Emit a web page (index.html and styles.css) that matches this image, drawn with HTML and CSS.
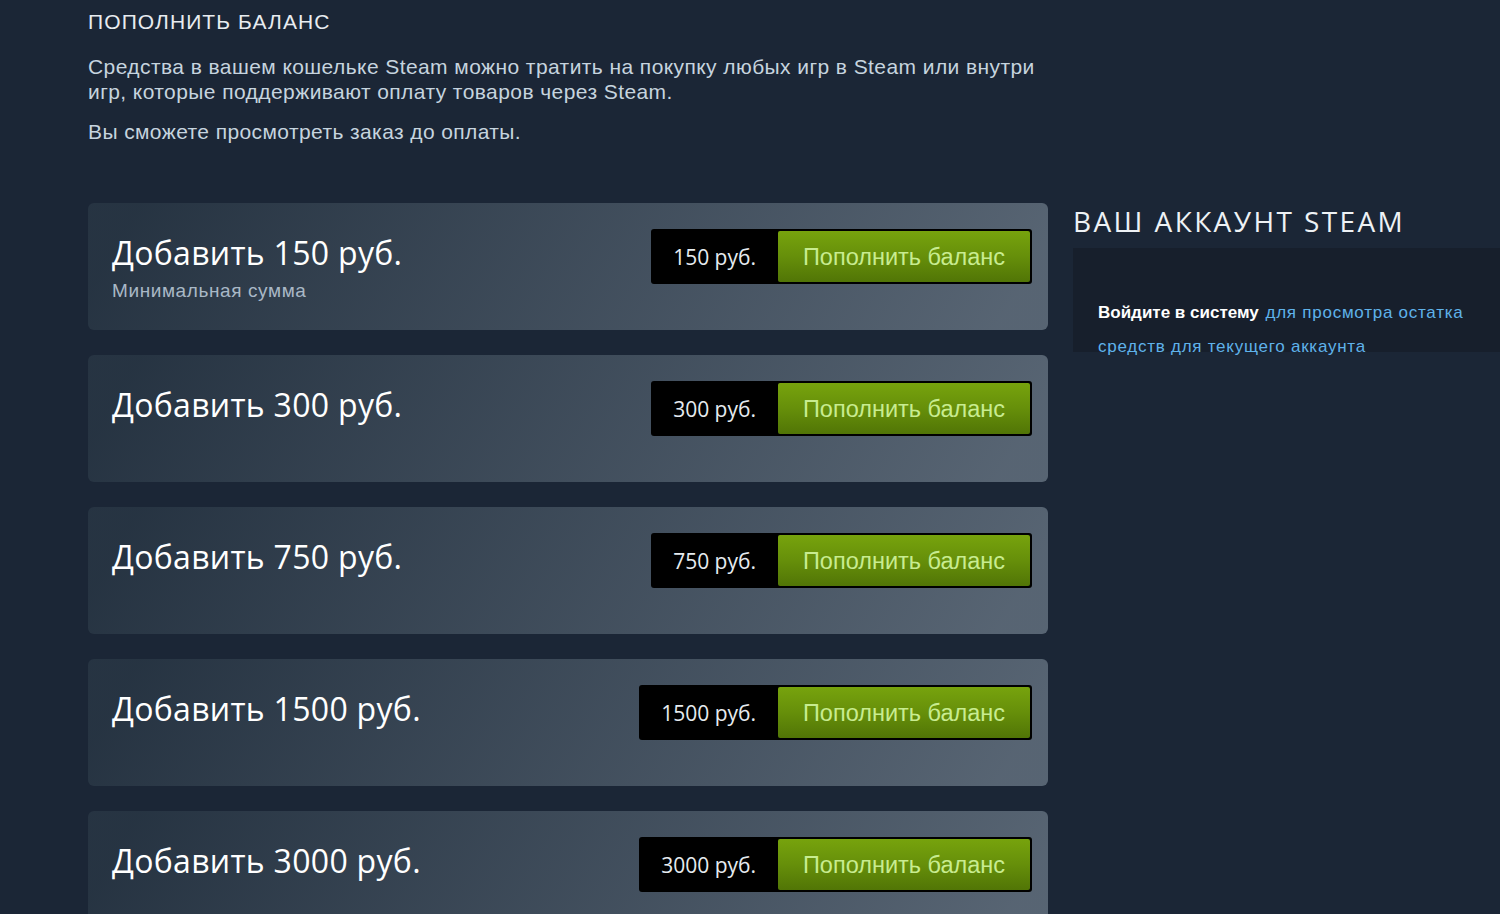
FILE: index.html
```html
<!DOCTYPE html>
<html lang="ru">
<head>
<meta charset="utf-8">
<title>Пополнить баланс</title>
<link rel="stylesheet" href="styles.css">
</head>
<body>
<div class="page">
  <div class="left">
    <h2 class="page-title">Пополнить баланс</h2>
    <p class="desc">Средства в вашем кошельке Steam можно тратить на покупку любых игр в Steam или внутри игр, которые поддерживают оплату товаров через Steam.</p>
    <p class="desc second">Вы сможете просмотреть заказ до оплаты.</p>

    <div class="cards">
      <div class="card">
        <div class="card-text">
          <div class="card-title">Добавить 150 руб.</div>
          <div class="card-sub">Минимальная сумма</div>
        </div>
        <div class="buy">
          <div class="price">150 руб.</div>
          <div class="btn">Пополнить баланс</div>
        </div>
      </div>
      <div class="card">
        <div class="card-text">
          <div class="card-title">Добавить 300 руб.</div>
        </div>
        <div class="buy">
          <div class="price">300 руб.</div>
          <div class="btn">Пополнить баланс</div>
        </div>
      </div>
      <div class="card">
        <div class="card-text">
          <div class="card-title">Добавить 750 руб.</div>
        </div>
        <div class="buy">
          <div class="price">750 руб.</div>
          <div class="btn">Пополнить баланс</div>
        </div>
      </div>
      <div class="card">
        <div class="card-text">
          <div class="card-title">Добавить 1500 руб.</div>
        </div>
        <div class="buy">
          <div class="price">1500 руб.</div>
          <div class="btn">Пополнить баланс</div>
        </div>
      </div>
      <div class="card">
        <div class="card-text">
          <div class="card-title">Добавить 3000 руб.</div>
        </div>
        <div class="buy">
          <div class="price">3000 руб.</div>
          <div class="btn">Пополнить баланс</div>
        </div>
      </div>
    </div>
  </div>

  <div class="right">
    <h3 class="acc-title">Ваш аккаунт Steam</h3>
    <div class="acc-box">
      <div class="acc-line"><span class="login">Войдите в систему</span> <a class="acc-link" href="#">для просмотра остатка</a></div>
      <div class="acc-line"><a class="acc-link" href="#">средств для текущего аккаунта</a></div>
    </div>
  </div>
</div>
</body>
</html>
```

FILE: styles.css
```css
html, body {
  margin: 0;
  padding: 0;
  background: #1b2636;
  height: 100%;
  overflow: hidden;
}

.page {
  display: flex;
  gap: 25px;
  padding-left: 88px;
  padding-top: 8px;
  font-family: "Liberation Sans", Arial, sans-serif;
  color: #c6d4df;
}

.left {
  width: 960px;
  flex: none;
}

.page-title {
  margin: 0;
  font-size: 21px;
  line-height: 28px;
  font-weight: normal;
  letter-spacing: 1.1px;
  text-transform: uppercase;
  color: #e8ecf0;
}

.desc {
  margin: 18px 0 0;
  font-size: 21px;
  line-height: 25px;
  letter-spacing: 0.42px;
  color: #c6d4df;
  width: 960px;
}

.desc.second {
  margin-top: 15px;
  letter-spacing: 0.4px;
}

.cards {
  margin-top: 59px;
  display: flex;
  flex-direction: column;
  gap: 25px;
}

.card {
  height: 127px;
  box-sizing: border-box;
  border-radius: 6px;
  background: linear-gradient(-60deg, rgba(226, 244, 255, 0.3) 5%, rgba(84, 107, 115, 0.2) 95%);
  display: flex;
  justify-content: space-between;
  align-items: flex-start;
  padding: 26px 16px 0 24px;
}

.card-text {
  padding-top: 4px;
}

.card-title {
  font-family: "Open Sans", sans-serif;
  font-size: 32px;
  line-height: 40px;
  letter-spacing: 0.3px;
  color: #ffffff;
}

.card-sub {
  font-size: 19px;
  line-height: 22px;
  letter-spacing: 0.6px;
  margin-top: 7px;
  color: #a9b8c6;
}

.buy {
  display: flex;
  background: #000;
  padding: 2px;
  border-radius: 3px;
  height: 55px;
  box-sizing: border-box;
}

.price {
  font-family: "Open Sans", sans-serif;
  font-size: 21px;
  color: #e6ebef;
  padding: 1px 22px 0 20px;
  display: flex;
  align-items: center;
}

.btn {
  width: 252px;
  box-sizing: border-box;
  border-radius: 2px;
  background: linear-gradient(to bottom, #77a30d 0%, #668f0a 50%, #517506 100%);
  color: #c8ec90;
  font-size: 23.5px;
  padding-top: 2px;
  display: flex;
  align-items: center;
  justify-content: center;
}

.right {
  flex: none;
  width: 480px;
  padding-top: 196px;
}

.acc-title {
  margin: 0;
  font-family: "Open Sans", sans-serif;
  font-weight: normal;
  font-size: 28px;
  line-height: 34px;
  letter-spacing: 2.4px;
  text-transform: uppercase;
  color: #eef2f5;
}

.acc-box {
  margin-top: 10px;
  height: 104px;
  box-sizing: border-box;
  background: #171f2c;
  padding: 48px 25px 0;
  font-size: 17px;
  line-height: 34px;
}

.acc-line {
  white-space: nowrap;
}

.login {
  color: #ffffff;
  font-weight: bold;
  margin-right: 2px;
}

.acc-link {
  color: #5fb2ea;
  text-decoration: none;
  letter-spacing: 0.75px;
}
```
